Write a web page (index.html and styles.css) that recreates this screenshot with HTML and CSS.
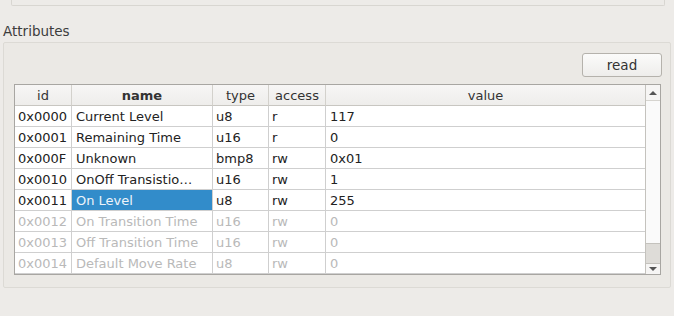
FILE: index.html
```html
<!DOCTYPE html>
<html lang="en">
<head>
<meta charset="UTF-8">
<title>Attributes</title>
<link rel="stylesheet" href="styles.css">
</head>
<body>
    <div class="top-panel"></div>
    <div class="section-label">Attributes</div>
    <div class="group">
        <div class="toolbar">
            <button class="btn" type="button">read</button>
        </div>
        <div class="table-view">
            <div class="grid">
                <div class="hd">id</div>
                <div class="hd bold">name</div>
                <div class="hd">type</div>
                <div class="hd">access</div>
                <div class="hd">value</div>

                <div class="cell">0x0000</div>
                <div class="cell">Current Level</div>
                <div class="cell">u8</div>
                <div class="cell">r</div>
                <div class="cell">117</div>

                <div class="cell">0x0001</div>
                <div class="cell">Remaining Time</div>
                <div class="cell">u16</div>
                <div class="cell">r</div>
                <div class="cell">0</div>

                <div class="cell">0x000F</div>
                <div class="cell">Unknown</div>
                <div class="cell">bmp8</div>
                <div class="cell">rw</div>
                <div class="cell">0x01</div>

                <div class="cell">0x0010</div>
                <div class="cell">OnOff Transistio…</div>
                <div class="cell">u16</div>
                <div class="cell">rw</div>
                <div class="cell">1</div>

                <div class="cell">0x0011</div>
                <div class="cell selected">On Level</div>
                <div class="cell">u8</div>
                <div class="cell">rw</div>
                <div class="cell">255</div>

                <div class="cell off">0x0012</div>
                <div class="cell off">On Transition Time</div>
                <div class="cell off">u16</div>
                <div class="cell off">rw</div>
                <div class="cell off">0</div>

                <div class="cell off">0x0013</div>
                <div class="cell off">Off Transition Time</div>
                <div class="cell off">u16</div>
                <div class="cell off">rw</div>
                <div class="cell off">0</div>

                <div class="cell off">0x0014</div>
                <div class="cell off">Default Move Rate</div>
                <div class="cell off">u8</div>
                <div class="cell off">rw</div>
                <div class="cell off">0</div>
            </div>
            <div class="scrollbar">
                <div class="arrow up"></div>
                <div class="slider"></div>
                <div class="trough"></div>
                <div class="arrow down"></div>
            </div>
        </div>
    </div>
</body>
</html>
```

FILE: styles.css
```css
* {
    box-sizing: border-box;
}
body {
    margin: 0;
    background-color: #edebe8;
    font: 13px "DejaVu Sans", sans-serif;
    color: #2b2b2b;
}

/* remains of the panel above */
.top-panel {
    margin-left: 11px;
    width: 654px;
    height: 6px;
    border: 1px solid #d8d6d1;
    border-top: none;
    border-radius: 0 0 2px 2px;
}
.section-label {
    margin: 16px 0 4px 3px;
    height: 16px;
    padding-top: 1px;
    line-height: 16px;
    font-size: 13.5px;
    color: #3c3c3c;
}

/* group box */
.group {
    margin-left: 3px;
    width: 668px;
    height: 246px;
    padding: 10px 8px 12px 10px;
    border: 1px solid #dcdad5;
    border-radius: 2px;
    background-color: #ebe9e5;
}
.toolbar {
    display: flex;
    justify-content: flex-end;
    margin-bottom: 7px;
}
.btn {
    width: 80px;
    height: 24px;
    padding: 0;
    border: 1px solid #b5b2ac;
    border-radius: 3px;
    background: linear-gradient(#fbfbfa, #eeedeb);
    font: 13.5px "DejaVu Sans", sans-serif;
    color: #333;
}

/* table view */
.table-view {
    display: flex;
    width: 647px;
    height: 191px;
    border: 1px solid #a8a6a2;
    background-color: #fff;
}
.grid {
    display: grid;
    grid-template-columns: 57px 141px 56px 57px 320px;
    grid-auto-rows: 21px;
    overflow: hidden;
}
.hd {
    background: linear-gradient(#f7f6f5, #eeedeb);
    border-right: 1px solid #d3d1cc;
    border-bottom: 1px solid #c8c6c1;
    padding-top: 1px;
    text-align: center;
    line-height: 20px;
    color: #333;
}
.hd.bold {
    font-weight: bold;
}
.cell {
    border-right: 1px solid #cfcfcf;
    border-bottom: 1px solid #cfcfcf;
    padding: 1px 0 0 3px;
    line-height: 20px;
    white-space: nowrap;
    overflow: hidden;
    color: #222;
}
.cell:nth-child(5n+2), .cell:nth-child(5n) {
    padding-left: 4px;
}
.cell.selected {
    background-color: #328cca;
    color: #eef4fa;
}
.cell.off {
    color: #b9b9b9;
}

/* vertical scrollbar */
.scrollbar {
    display: flex;
    flex-direction: column;
    width: 15px;
    border-left: 1px solid #c4c2bd;
    background-color: #f4f3f1;
}
.arrow {
    height: 15px;
    display: flex;
    align-items: center;
    justify-content: center;
    background-color: #f6f5f4;
}
.arrow.down {
    height: 11px;
    border-top: 1px solid #c4c2bd;
}
.arrow.up::after, .arrow.down::after {
    content: "";
    border-left: 4px solid transparent;
    border-right: 4px solid transparent;
}
.arrow.up::after {
    border-bottom: 4px solid #555;
}
.arrow.down::after {
    border-top: 4px solid #555;
}
.slider {
    height: 143px;
    border-top: 1px solid #d6d4cf;
    background-color: #fafafa;
}
.trough {
    flex: 1;
    border-top: 1px solid #c4c2bd;
    background-color: #dedcd8;
}
```
